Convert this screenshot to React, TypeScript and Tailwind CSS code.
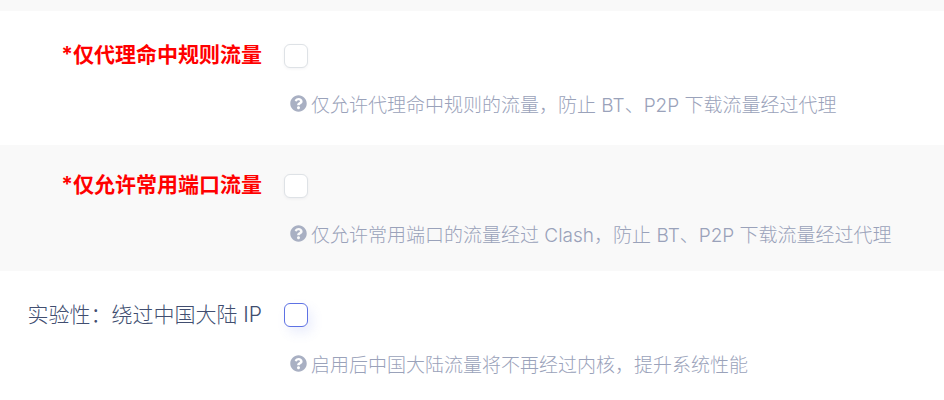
import { FaQuestionCircle } from "react-icons/fa";

type Option = {
  id: string;
  label: string;
  help: string;
  important?: boolean;
  striped?: boolean;
  active?: boolean;
};

const options: Option[] = [
  {
    id: "rule-only",
    label: "*仅代理命中规则流量",
    help: "仅允许代理命中规则的流量，防止 BT、P2P 下载流量经过代理",
    important: true,
  },
  {
    id: "common-ports",
    label: "*仅允许常用端口流量",
    help: "仅允许常用端口的流量经过 Clash，防止 BT、P2P 下载流量经过代理",
    important: true,
    striped: true,
  },
  {
    id: "bypass-mainland",
    label: "实验性：绕过中国大陆 IP",
    help: "启用后中国大陆流量将不再经过内核，提升系统性能",
    active: true,
  },
];

function OptionRow({ id, label, help, important, striped, active }: Option) {
  return (
    <div
      className={`flex border-y-2 border-white pt-6 pb-5 last:border-b-0 last:pb-4 ${
        striped ? "bg-[#f9f9f9]" : "bg-white"
      }`}
    >
      <label
        htmlFor={id}
        className={`w-[262px] shrink-0 text-right text-[21px] leading-8 whitespace-nowrap ${
          important ? "font-bold text-[#ff0000]" : "font-light text-[#414e70]"
        }`}
      >
        {label}
      </label>
      <div className="min-w-0 flex-1 pl-[22px]">
        <div className="flex h-10 items-start pt-[5px]">
          <input
            id={id}
            type="checkbox"
            aria-describedby={`${id}-help`}
            className={`size-6 appearance-none rounded-md border bg-white ${
              active
                ? "-translate-y-px border-[#5e72e4] shadow-[4px_6px_12px_rgba(94,114,228,0.12)]"
                : "border-[#dee2e6] shadow-[0_1px_3px_rgba(50,50,93,0.06)]"
            }`}
          />
        </div>
        <p
          id={`${id}-help`}
          className="flex items-center gap-1 pt-3 pl-1.5 text-[19px] leading-[30px] font-light whitespace-nowrap text-[#9aa2ba]"
        >
          <FaQuestionCircle className="mb-1.5 size-[17px] shrink-0 text-[#a9b0c3]" aria-hidden="true" />
          <span>{help}</span>
        </p>
      </div>
    </div>
  );
}

export default function App() {
  return (
    <form className="w-full overflow-hidden bg-white font-['Inter','Noto_Sans_CJK_SC',sans-serif]">
      <div className="h-[13px] border-b-2 border-white bg-[#f9f9f9]" />
      {options.map((option) => (
        <OptionRow key={option.id} {...option} />
      ))}
    </form>
  );
}
